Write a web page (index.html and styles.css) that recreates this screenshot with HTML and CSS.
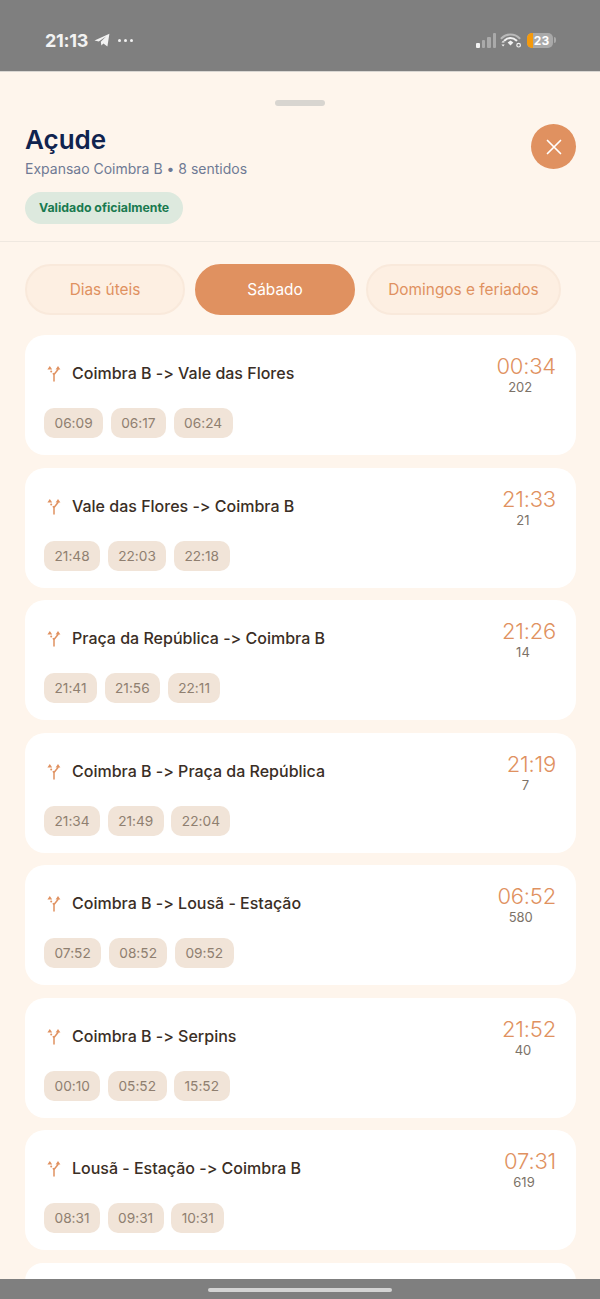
FILE: index.html
```html
<!DOCTYPE html>
<html lang="en">
  <head>
    <meta charset="UTF-8" />
    <meta name="viewport" content="width=device-width, initial-scale=1.0" />
    <title>Açude</title>
    <link rel="stylesheet" href="styles.css">
  </head>
  <body>
    <svg class="icon-defs" width="0" height="0">
      <symbol id="fork" viewBox="0 0 16 18">
        <path d="M8 16V9.5L12 4.5" fill="none" stroke="currentColor" stroke-width="1.5" stroke-linecap="round" stroke-linejoin="round"/>
        <path d="M12 1l2.4 3.4H9.6zM3.8 1l2.4 3.4H1.4z" fill="currentColor"/>
        <path d="M8 9.5L6.9 8.2" fill="none" stroke="currentColor" stroke-width="1.5"/>
        <circle cx="5.2" cy="6.6" r="1" fill="currentColor"/>
      </symbol>
    </svg>

    <!-- Status bar -->
    <div class="status-bar">
      <div class="status-left">
        <span class="clock">21:13</span>
        <svg class="plane" width="16" height="14" viewBox="0 0 16 14">
          <path d="M0.5 7.4L15.4 0.8 13.4 13.4 9.4 10.6 7.4 12.6 6.8 8.8 12 3.6 4.8 8.6z" fill="#f2f2f2"/>
        </svg>
        <span class="more">
          <i></i><i></i><i></i>
        </span>
      </div>
      <div class="status-right">
        <div class="signal">
          <i class="on"></i><i></i><i></i><i></i>
        </div>
        <svg class="wifi" width="22" height="16" viewBox="0 0 22 16">
          <path d="M1.5 6.2C6.5 1.2 14.5 1.2 19.5 6.2" fill="none" stroke="#b9b9b9" stroke-width="2" stroke-linecap="round"/>
          <path d="M4.6 8.4C8 5.2 13 5.2 16.4 8.4" fill="none" stroke="#f2f2f2" stroke-width="2" stroke-linecap="round"/>
          <path d="M7.6 10.6L10.5 8.6 13.4 10.6 10.5 13.4z" fill="#f2f2f2"/>
          <path d="M1.5 10.6l1.6-1.8 1.6 1.8zM1.5 12.6l1.6 1.8 1.6-1.8z" fill="#f2f2f2"/>
          <circle cx="18.6" cy="13.2" r="1.8" fill="none" stroke="#f2f2f2" stroke-width="1.2"/>
        </svg>
        <div class="battery">
          <div class="battery-fill"></div>
          <span>23</span>
        </div>
        <div class="battery-tip"></div>
      </div>
    </div>

    <div class="sheet">
      <div class="handle"></div>

      <!-- Header -->
      <div class="sheet-header">
        <div class="header-text">
          <h1>Açude</h1>
          <p class="subtitle">Expansao Coimbra B • 8 sentidos</p>
          <span class="badge">Validado oficialmente</span>
        </div>
        <button class="close-button">
          <svg width="16" height="16" viewBox="0 0 16 16">
            <path d="M1.5 1.5l13 13M14.5 1.5l-13 13" stroke="#fff" stroke-width="1.7" stroke-linecap="round"/>
          </svg>
        </button>
      </div>

      <!-- Tabs -->
      <div class="tabs">
        <div class="tab tab-week">Dias úteis</div>
        <div class="tab tab-sat active">Sábado</div>
        <div class="tab tab-sun">Domingos e feriados</div>
      </div>

      <!-- Routes -->
      <div class="route-list">
        <div class="route-card">
          <div class="route-top">
            <svg class="route-icon"><use href="#fork"/></svg>
            <div class="route-name">Coimbra B -&gt; Vale das Flores</div>
            <div class="route-next"><span class="next-time">00:34</span><span class="next-count">202</span></div>
          </div>
          <div class="chips"><span class="chip">06:09</span><span class="chip">06:17</span><span class="chip">06:24</span></div>
        </div>
        <div class="route-card">
          <div class="route-top">
            <svg class="route-icon"><use href="#fork"/></svg>
            <div class="route-name">Vale das Flores -&gt; Coimbra B</div>
            <div class="route-next"><span class="next-time">21:33</span><span class="next-count">21</span></div>
          </div>
          <div class="chips"><span class="chip">21:48</span><span class="chip">22:03</span><span class="chip">22:18</span></div>
        </div>
        <div class="route-card">
          <div class="route-top">
            <svg class="route-icon"><use href="#fork"/></svg>
            <div class="route-name">Praça da República -&gt; Coimbra B</div>
            <div class="route-next"><span class="next-time">21:26</span><span class="next-count">14</span></div>
          </div>
          <div class="chips"><span class="chip">21:41</span><span class="chip">21:56</span><span class="chip">22:11</span></div>
        </div>
        <div class="route-card">
          <div class="route-top">
            <svg class="route-icon"><use href="#fork"/></svg>
            <div class="route-name">Coimbra B -&gt; Praça da República</div>
            <div class="route-next"><span class="next-time">21:19</span><span class="next-count">7</span></div>
          </div>
          <div class="chips"><span class="chip">21:34</span><span class="chip">21:49</span><span class="chip">22:04</span></div>
        </div>
        <div class="route-card">
          <div class="route-top">
            <svg class="route-icon"><use href="#fork"/></svg>
            <div class="route-name">Coimbra B -&gt; Lousã - Estação</div>
            <div class="route-next"><span class="next-time">06:52</span><span class="next-count">580</span></div>
          </div>
          <div class="chips"><span class="chip">07:52</span><span class="chip">08:52</span><span class="chip">09:52</span></div>
        </div>
        <div class="route-card">
          <div class="route-top">
            <svg class="route-icon"><use href="#fork"/></svg>
            <div class="route-name">Coimbra B -&gt; Serpins</div>
            <div class="route-next"><span class="next-time">21:52</span><span class="next-count">40</span></div>
          </div>
          <div class="chips"><span class="chip">00:10</span><span class="chip">05:52</span><span class="chip">15:52</span></div>
        </div>
        <div class="route-card">
          <div class="route-top">
            <svg class="route-icon"><use href="#fork"/></svg>
            <div class="route-name">Lousã - Estação -&gt; Coimbra B</div>
            <div class="route-next"><span class="next-time">07:31</span><span class="next-count">619</span></div>
          </div>
          <div class="chips"><span class="chip">08:31</span><span class="chip">09:31</span><span class="chip">10:31</span></div>
        </div>
        <div class="route-card route-card-cut"></div>
      </div>
    </div>

    <!-- Home indicator, lies over the list -->
    <div class="home-bar"><div class="home-pill"></div></div>
  </body>
</html>
```

FILE: styles.css
```css
* {
  box-sizing: border-box;
}

body {
  font-family: "Inter", sans-serif;
  font-variant-ligatures: none;
  font-feature-settings: "calt" 0;
  margin: 0;
  padding: 0;
  height: 1299px;
  overflow: hidden;
  position: relative;
  background-color: #fef5ec;
}

.icon-defs {
  position: absolute;
}

/* Status bar */
.status-bar {
  height: 72px;
  background-color: #7f7f7f;
  display: flex;
  justify-content: space-between;
  align-items: center;
  padding: 9px 44px 0 45px;
  border-bottom: 1px solid #d9d6d2;
}

.status-left {
  display: flex;
  align-items: center;
}

.clock {
  color: #f2f2f2;
  font-size: 18px;
  font-weight: 700;
  letter-spacing: -0.3px;
}

.plane {
  margin-left: 6px;
}

.more {
  display: flex;
  gap: 3px;
  margin-left: 8px;
}

.more i {
  width: 3px;
  height: 3px;
  border-radius: 50%;
  background-color: #f2f2f2;
}

.status-right {
  display: flex;
  align-items: center;
}

.signal {
  display: flex;
  align-items: flex-end;
  gap: 2px;
  height: 15px;
}

.signal i {
  width: 3.5px;
  background-color: #aaa;
  border-radius: 1px;
}

.signal i:nth-child(1) { height: 5px; background-color: #f2f2f2; }
.signal i:nth-child(2) { height: 8px; }
.signal i:nth-child(3) { height: 11px; }
.signal i:nth-child(4) { height: 15px; }

.wifi {
  margin-left: 4px;
}

.battery {
  position: relative;
  width: 26px;
  height: 15px;
  margin-left: 5px;
  border-radius: 5px;
  background-color: #a9a9a9;
  overflow: hidden;
  display: flex;
  align-items: center;
  justify-content: center;
}

.battery-fill {
  position: absolute;
  left: 0;
  top: 0;
  bottom: 0;
  width: 6px;
  background-color: #f59a0c;
}

.battery span {
  position: relative;
  color: #fff;
  font-size: 12px;
  font-weight: 700;
  padding-left: 3px;
}

.battery-tip {
  width: 2px;
  height: 6px;
  margin-left: 1px;
  border-radius: 0 2px 2px 0;
  background-color: #a9a9a9;
}

/* Sheet */
.sheet {
  background-color: #fef5ec;
}

.handle {
  width: 50px;
  height: 6px;
  margin: 28px auto 0;
  border-radius: 3px;
  background-color: #d8d5d0;
}

.sheet-header {
  display: flex;
  justify-content: space-between;
  align-items: flex-start;
  padding: 17px 24px 17px 25px;
  border-bottom: 1px solid #efe8e0;
}

.header-text h1 {
  margin: 0;
  padding-top: 1px;
  color: #10234f;
  font-size: 26px;
  font-weight: 600;
  line-height: 32px;
}

.subtitle {
  margin: 4px 0 0;
  color: #6f7a94;
  font-size: 14px;
  line-height: 18px;
}

.badge {
  display: inline-block;
  margin-top: 14px;
  padding: 0 14px;
  height: 32px;
  line-height: 32px;
  border-radius: 16px;
  background-color: #dde9de;
  color: #1a7a50;
  font-size: 12.3px;
  font-weight: 700;
}

.close-button {
  width: 45px;
  height: 45px;
  margin-top: 1px;
  padding: 0;
  border: none;
  border-radius: 50%;
  background-color: #e09160;
  display: flex;
  align-items: center;
  justify-content: center;
}

/* Tabs */
.tabs {
  display: flex;
  gap: 10px;
  padding: 22px 25px 0;
}

.tab {
  height: 51px;
  border-radius: 26px;
  display: flex;
  align-items: center;
  justify-content: center;
  font-size: 15.4px;
  color: #e09160;
  background-color: #fdefe2;
  border: 2px solid #f9e9db;
}

.tab-week,
.tab-sat {
  width: 160px;
}

.tab-sun {
  width: 195px;
  margin-left: 1px;
}

.tab.active {
  color: #fff;
  background-color: #e09160;
  border-color: #e09160;
}

/* Route cards */
.route-list {
  display: flex;
  flex-direction: column;
  gap: 12.5px;
  padding: 20px 24px 0 25px;
}

.route-card {
  height: 120px;
  flex-shrink: 0;
  padding: 19px 20px 0 19px;
  border-radius: 20px;
  background-color: #fff;
}

/* only its top edge shows above the home bar */
.route-card-cut {
  height: 36px;
}

.route-top {
  display: flex;
  align-items: flex-start;
  height: 54px;
}

.route-icon {
  width: 16px;
  height: 18px;
  margin: 11px 0 0 2px;
  color: #e09160;
  flex-shrink: 0;
}

.route-name {
  flex: 1;
  margin: 9px 0 0 10px;
  color: #3a2e25;
  font-size: 16px;
  font-weight: 500;
  line-height: 20px;
}

.route-next {
  display: flex;
  flex-direction: column;
  align-items: center;
}

.next-time {
  color: #e09160;
  font-size: 22px;
  font-weight: 300;
  letter-spacing: -0.2px;
  line-height: 24px;
}

.next-count {
  margin-right: 12px;
  color: #7c7268;
  font-size: 13px;
  line-height: 18px;
}

.chips {
  display: flex;
  gap: 7.5px;
}

.chip {
  height: 30px;
  padding: 0 10.5px;
  border-radius: 10px;
  background-color: #f1e4d8;
  color: #8f7f70;
  font-size: 13.7px;
  line-height: 30px;
}

/* Home indicator */
.home-bar {
  position: absolute;
  left: 0;
  right: 0;
  bottom: 0;
  height: 20px;
  background-color: #7f7f7f;
  display: flex;
  justify-content: center;
  padding-top: 9px;
}

.home-pill {
  width: 184px;
  height: 4px;
  border-radius: 2px;
  background-color: #d4d4d4;
}
```
